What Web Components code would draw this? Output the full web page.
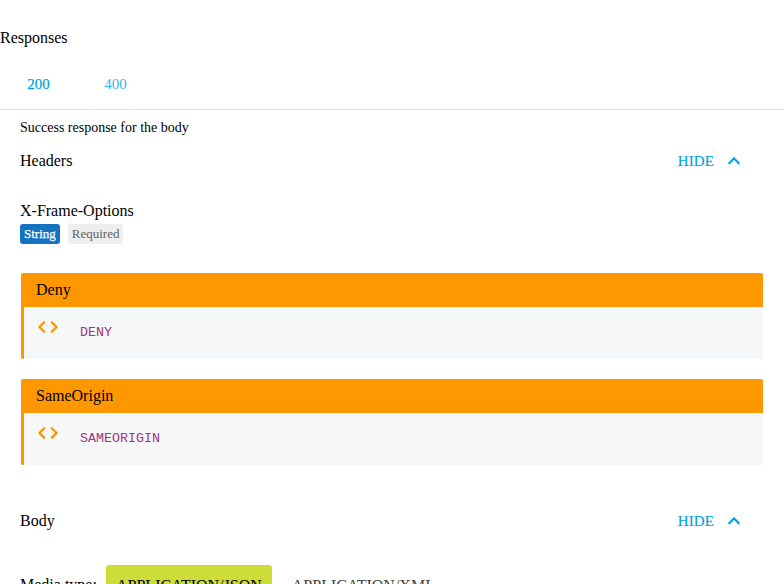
<!DOCTYPE html>
<html lang="en"><head><meta charset="utf-8"><title>Responses</title>
<style>
html,body{margin:0;height:584px;overflow:hidden;background:#fff}
body{font:16px/20px "Liberation Serif","Times New Roman",serif;color:#000}
</style></head><body>
<api-responses></api-responses>
<script>
const define = (name, html) => customElements.define(name, class extends HTMLElement {
  connectedCallback() {
    if (this.shadowRoot) return;
    const t = document.createElement('template');
    t.innerHTML = html;
    this.attachShadow({mode: 'open'}).append(t.content.cloneNode(true));
  }
});
define('status-tabs', `<style>
:host{display:flex;height:50px;border-bottom:1px solid #e0e0e0;color:#00a2df;font-size:15px}
::slotted(span){box-sizing:border-box;width:77px;text-align:center;line-height:51px}
::slotted(span[selected]){-webkit-text-stroke:.25px currentColor}
::slotted(span:not([selected])){opacity:.8}
</style><slot></slot>`);
define('section-title', `<style>
:host{display:flex;height:40px;align-items:center;justify-content:space-between}
.toggle{display:flex;align-items:center;color:#00a2df;font-size:15px;padding-right:8px}
.label{letter-spacing:.1px;-webkit-text-stroke:.15px currentColor}
svg{width:24px;height:24px;margin-left:8px;margin-right:10px;fill:currentColor}
</style><slot></slot><div class="toggle"><span class="label">HIDE</span>
<svg viewBox="0 0 24 24"><path d="M12 8l-6 6 1.41 1.41L12 10.83l4.59 4.58L18 14z" stroke="currentColor" stroke-width=".3"/></svg></div>`);
define('type-badge', `<style>
:host{display:block;box-sizing:border-box;height:20px;padding:0 4px;border-radius:3px;background:#eee;color:#616161;font-size:13px;line-height:20px}
:host([primary]){background:#1473bf;color:#fff;-webkit-text-stroke:.25px #fff}
</style><slot></slot>`);
define('example-card', `<style>
:host{display:block;margin:0 1px 20px;height:86px;box-sizing:border-box;border-left:3px solid #ff9800;border-radius:2px;background:#f5f7f9;overflow:hidden}
.head{height:34px;line-height:34px;padding-left:12px;background:#ff9800}
.body{display:flex;height:52px}
svg{width:24px;height:24px;margin:8px 20px 0 12px;fill:#ff9800}
code{font:13.333px/20px "Liberation Mono","Courier New",monospace;color:#a8327c;padding-top:16px}
</style><div class="head"><slot name="title"></slot></div><div class="body">
<svg viewBox="0 0 24 24"><path d="M9.4 16.6L4.8 12l4.6-4.6L8 6l-6 6 6 6zm5.2 0l4.6-4.6-4.6-4.6L16 6l6 6-6 6z" stroke="#ff9800" stroke-width=".4"/></svg>
<code><slot></slot></code></div>`);
define('media-option', `<style>
:host{display:block;box-sizing:border-box;height:38px;padding:0 10px;border-radius:3px;color:#424242;font-size:16px;line-height:41px;white-space:nowrap}
:host([selected]){background:#cddc39;color:#000}
</style><slot></slot>`);
define('api-responses', `<style>
:host{display:block}
h2{font:inherit;margin:0;padding:28px 0 11px}
.content{padding:8px 20px 0}
.description{font-size:14px;height:23px}
.name{height:20px;margin-top:20px}
.badges{display:flex;gap:8px;margin:3px 0 29px}
.body-title{margin-top:36px}
.media{display:flex;align-items:center;margin-top:24px}
.media-label{width:86px;line-height:22px;padding-top:2px;white-space:nowrap}
.media media-option + media-option{margin-left:10px}
</style>
<h2>Responses</h2>
<status-tabs><span selected>200</span><span>400</span></status-tabs>
<div class="content">
<div class="description">Success response for the body</div>
<section-title>Headers</section-title>
<div class="name">X-Frame-Options</div>
<div class="badges"><type-badge primary>String</type-badge><type-badge>Required</type-badge></div>
<example-card><span slot="title">Deny</span>DENY</example-card>
<example-card><span slot="title">SameOrigin</span>SAMEORIGIN</example-card>
<section-title class="body-title">Body</section-title>
<div class="media"><span class="media-label">Media type:</span><media-option selected>APPLICATION/JSON</media-option><media-option>APPLICATION/XML</media-option></div>
</div>`);
</script></body></html>
